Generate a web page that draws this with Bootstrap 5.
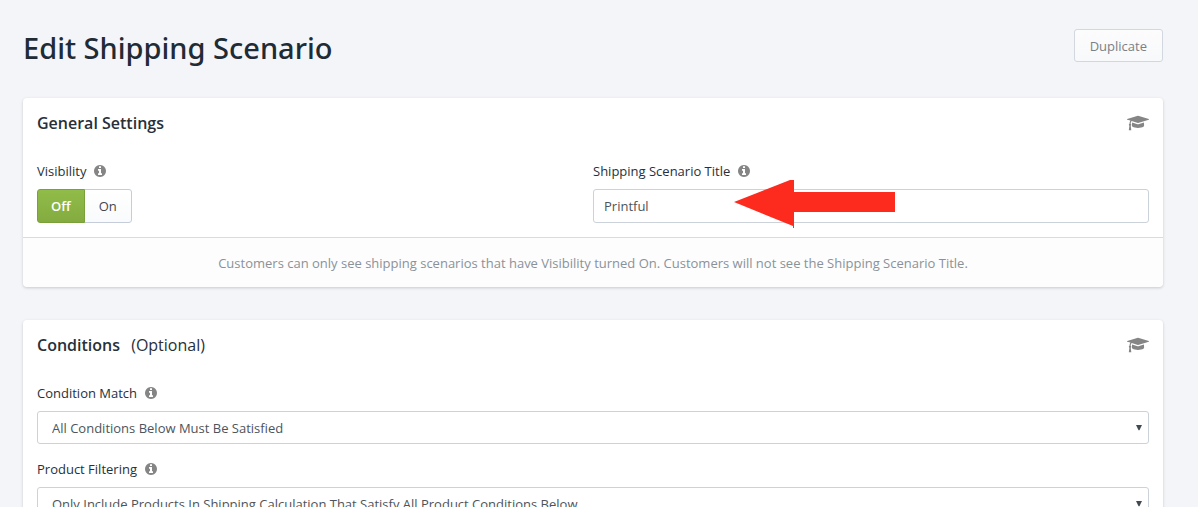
<!DOCTYPE html>
<html lang="en">
<head>
<meta charset="utf-8">
<meta name="viewport" content="width=device-width, initial-scale=1">
<title>Edit Shipping Scenario</title>
<link href="https://cdn.jsdelivr.net/npm/bootstrap@5.3.0/dist/css/bootstrap.min.css" rel="stylesheet">
<style>
  body { background: #f4f5f8; color: #273039; font: 13px/20px "Open Sans", "Noto Sans", sans-serif; }
  .page { padding: 29px 35px 32px 23px; }
  .page-head { margin-bottom: 31px; }
  .page-head h1 { font-family: "Noto Sans", "Open Sans", sans-serif; font-size: 29px; line-height: 38px; font-weight: 500; color: #212b35; }
  .panel { border: 0; border-radius: 4px; margin-bottom: 33px; color: inherit; box-shadow: 0 1px 3px rgba(39, 48, 57, .22); }
  .panel-head { padding: 14px 14px 0; }
  .panel-head h2 { font-size: 16px; line-height: 22px; font-weight: 600; }
  .panel-head h2 span { font-weight: 400; margin-left: 7px; }
  .panel .card-body { padding: 27px 14px 14px; }
  .panel .card-footer { padding: 15px 14px 14px; background: #fdfdfd; border-top: 1px solid #d9dbdd; color: #8a9299; }
  .fields { display: grid; gap: 15px; }
  .field-label { margin-bottom: 8px; }
  .field-head { display: flex; align-items: start; gap: 8px; }
  .info { width: 12px; height: 12px; margin-top: 4px; fill: #858585; }
  .cap { width: 22px; height: 18px; fill: #858585; }
  .panel .form-control, .panel .form-select { border-color: #ccd2d9; border-radius: 3px; font-size: 13px; line-height: 20px; color: #4d545b; }
  .panel .form-control { padding: 6px 10px; }
  .panel .form-select { padding: 6px 28px 5px 14px; background-position: right 6px center; background-size: 6px 6px;
    background-image: url("data:image/svg+xml,%3Csvg xmlns='http://www.w3.org/2000/svg' viewBox='0 0 7 7'%3E%3Cpath fill='%23404a53' d='M0 0h7L4 6H3z'/%3E%3C/svg%3E"); }
  .plain-btn { padding: 6px 15px 5px; border: 1px solid #d3d7df; border-radius: 3px; background: linear-gradient(#fcfcfd, #f8f9fa); color: #7a8086; font-size: 13px; line-height: 20px; }
  .toggle-btn { padding: 6px 14px; border: 1px solid #c4cdd9; border-radius: 3px; background: linear-gradient(#fff, #f9fafb); color: #42484e; font-size: 13px; line-height: 20px; }
  .toggle-btn.active { padding: 6px 13px; background: linear-gradient(#90bc48, #84ab40); border-color: #7aa03a; color: #fff; font-weight: 600; }
  .callout-arrow { position: absolute; left: 141px; top: -10px; width: 162px; height: 50px; pointer-events: none; }
</style>
</head>
<body>
<svg class="d-none" aria-hidden="true">
  <symbol id="info" viewBox="128 128 1536 1536"><path d="M1152 1376v-160q0-14-9-23t-23-9h-96v-512q0-14-9-23t-23-9h-320q-14 0-23 9t-9 23v160q0 14 9 23t23 9h96v320h-96q-14 0-23 9t-9 23v160q0 14 9 23t23 9h448q14 0 23-9t9-23zm-128-896v-160q0-14-9-23t-23-9h-192q-14 0-23 9t-9 23v160q0 14 9 23t23 9h192q14 0 23-9t9-23zm640 416q0 209-103 385.5t-279.5 279.5-385.5 103-385.5-103-279.5-279.5-103-385.5 103-385.5 279.5-279.5 385.5-103 385.5 103 279.5 279.5 103 385.5z"/></symbol>
  <symbol id="cap" viewBox="0 0 2304 1792"><path d="M1774 836l18 316q4 69-82 128t-235 93.500-323 34.500-323-34.500-235-93.500-82-128l18-316 574 181q22 7 48 7t48-7zm530-324q0 23-22 31l-1120 352q-4 1-10 1t-10-1l-652-206q-43 34-71 111.500t-34 178.500q63 36 63 109 0 69-58 107l58 433q2 14-8 25-9 11-24 11h-192q-15 0-24-11-10-11-8-25l58-433q-58-38-58-107 0-73 65-111 11-207 98-330l-333-104q-22-8-22-31t22-31l1120-352q4-1 10-1t10 1l1120 352q22 8 22 31z"/></symbol>
</svg>
<main class="page">
  <header class="page-head d-flex justify-content-between align-items-start">
    <h1 class="m-0">Edit Shipping Scenario</h1>
    <button type="button" class="btn plain-btn">Duplicate</button>
  </header>

  <section class="card panel">
    <div class="panel-head d-flex justify-content-between align-items-center">
      <h2 class="m-0">General Settings</h2>
      <svg class="cap" aria-hidden="true"><use href="#cap"/></svg>
    </div>
    <div class="card-body">
      <div class="row g-0">
        <div class="col-6">
          <div class="field-head"><span class="field-label" id="vis">Visibility</span><svg class="info" aria-hidden="true"><use href="#info"/></svg></div>
          <div class="btn-group" role="group" aria-labelledby="vis">
            <button type="button" class="btn toggle-btn active" aria-pressed="true">Off</button>
            <button type="button" class="btn toggle-btn" aria-pressed="false">On</button>
          </div>
        </div>
        <div class="col-6">
          <div class="field-head"><label class="field-label" for="title">Shipping Scenario Title</label><svg class="info" aria-hidden="true"><use href="#info"/></svg></div>
          <div class="position-relative">
            <input type="text" class="form-control" id="title" value="Printful">
            <svg class="callout-arrow" viewBox="0 0 162 50" aria-hidden="true"><path fill="#fd2b1d" d="M0 23 56 1h4v12h101v20H60v16h-1v-2z"/></svg>
          </div>
        </div>
      </div>
    </div>
    <div class="card-footer text-center">Customers can only see shipping scenarios that have Visibility turned On. Customers will not see the Shipping Scenario Title.</div>
  </section>

  <section class="card panel">
    <div class="panel-head d-flex justify-content-between align-items-center">
      <h2 class="m-0">Conditions <span>(Optional)</span></h2>
      <svg class="cap" aria-hidden="true"><use href="#cap"/></svg>
    </div>
    <div class="card-body fields">
      <div>
        <div class="field-head"><label class="field-label" for="match">Condition Match</label><svg class="info" aria-hidden="true"><use href="#info"/></svg></div>
        <select class="form-select" id="match"><option>All Conditions Below Must Be Satisfied</option></select>
      </div>
      <div>
        <div class="field-head"><label class="field-label" for="filter">Product Filtering</label><svg class="info" aria-hidden="true"><use href="#info"/></svg></div>
        <select class="form-select" id="filter"><option>Only Include Products In Shipping Calculation That Satisfy All Product Conditions Below</option></select>
      </div>
    </div>
  </section>
</main>
<script src="https://cdn.jsdelivr.net/npm/bootstrap@5.3.0/dist/js/bootstrap.bundle.min.js"></script>
</body>
</html>
